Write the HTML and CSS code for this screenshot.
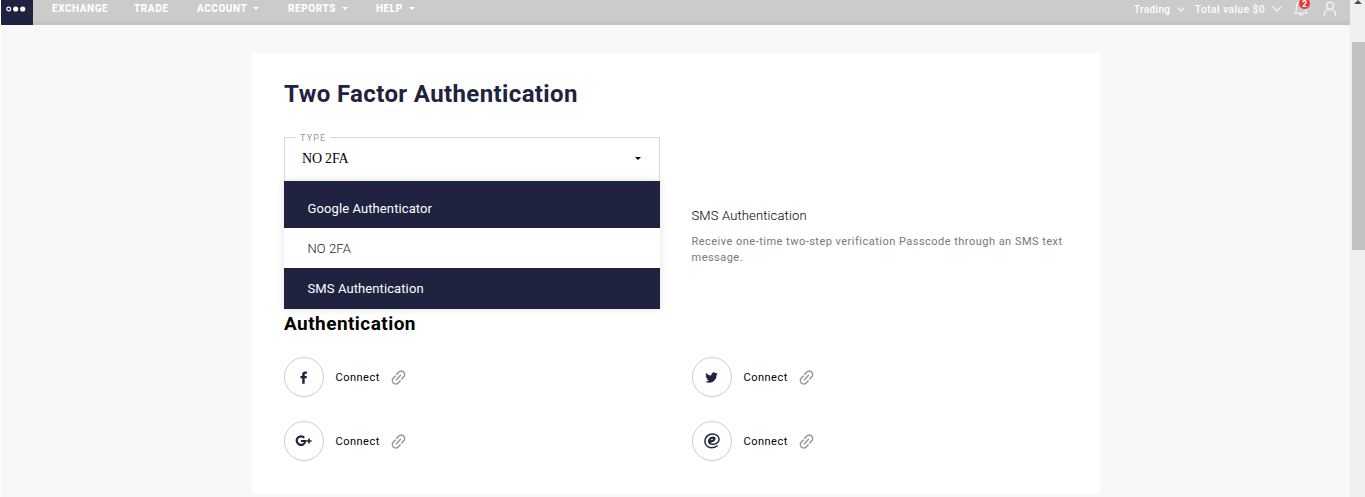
FILE: index.html
```html
<!DOCTYPE html>
<html lang="en">
<head>
    <meta charset="UTF-8">
    <meta name="viewport" content="width=device-width, initial-scale=1.0">
    <title>Two Factor Authentication</title>
    <link rel="stylesheet" href="styles.css">
</head>
<body>
    <svg class="sprite" width="0" height="0">
        <symbol id="link" viewBox="0 0 24 24">
            <g transform="rotate(-48 12 12)" fill="none" stroke="#999" stroke-width="2.4" stroke-linecap="round">
                <path d="M10 6.500H5.500a5.500 5.500 0 0 0 0 11H10M14 6.500h4.500a5.500 5.500 0 0 1 0 11H14M7 12h10"/>
            </g>
        </symbol>
    </svg>
    <div class="page">
        <header class="topbar">
            <a class="logo">
                <svg width="20" height="8" viewBox="0 0 20 8">
                    <circle cx="2.7" cy="4" r="1.9" fill="none" stroke="#fff" stroke-width="1.2"/>
                    <circle cx="9.7" cy="4" r="2.6" fill="#fff"/>
                    <circle cx="16.7" cy="4" r="2.6" fill="#fff"/>
                </svg>
            </a>
            <nav class="menu">
                <a class="exchange">EXCHANGE</a>
                <a class="trade">TRADE</a>
                <a class="account">ACCOUNT<i class="caret"></i></a>
                <a class="reports">REPORTS<i class="caret"></i></a>
                <a class="help">HELP<i class="caret"></i></a>
            </nav>
            <div class="tools">
                <span class="trading">Trading</span>
                <svg class="chevron small" width="8" height="5" viewBox="0 0 8 5"><path d="M.5.5 4 4 7.5.5"/></svg>
                <span class="total">Total value $0</span>
                <svg class="chevron" width="10" height="6" viewBox="0 0 10 6"><path d="M.5.5 5 5 9.5.5"/></svg>
                <span class="bell">
                    <svg width="16" height="16" viewBox="0 0 16 16" fill="none" stroke="#f6f6f6" stroke-width="1.2"><path d="M1 13h14M2.500 13C4 11 3 8 3.500 6 4 3 6 1.500 8 1.500s4 1.500 4.500 4.500c.5 2-.5 5 1 7M5.800 13c.5 2.700 4 2.700 4.500 0"/></svg>
                    <b class="badge">2</b>
                </span>
                <svg class="user" width="14" height="16" viewBox="0 0 14 16" fill="none" stroke="#f6f6f6" stroke-width="1.2"><circle cx="7" cy="4.700" r="3.500"/><path d="M1.300 15V13.500C1.500 10.500 4 8.300 7 8.300s5.500 2.200 5.700 5.200V15"/></svg>
            </div>
        </header>
        <main class="card">
            <h1>Two Factor Authentication</h1>
            <div class="row">
                <div class="select">
                    <span class="legend">TYPE</span>
                    <span class="value">NO 2FA</span>
                    <i class="caret dark"></i>
                    <ul class="options">
                        <li class="first">Google Authenticator</li>
                        <li class="selected">NO 2FA</li>
                        <li class="last">SMS Authentication</li>
                    </ul>
                </div>
                <div class="info">
                    <h3>SMS Authentication</h3>
                    <p>Receive one-time two-step verification Passcode through an SMS text message.</p>
                </div>
            </div>
            <h2>Authentication</h2>
            <div class="accounts">
                <div class="social">
                    <span class="round"><svg class="fb" width="8" height="13" viewBox="0 0 8 13"><path d="M2.200 12.700V7.200H.4V4.900h1.800V3.500C2.200 1.500 3.300.4 5 .4c.8 0 1.500.1 1.900.1v2.200H5.800c-.8 0-1.100.4-1.100 1v1.200h2.200l-.3 2.300H4.700v5.500z"/></svg></span>
                    <span class="connect">Connect</span>
                    <svg class="link"><use href="#link"/></svg>
                </div>
                <div class="social">
                    <span class="round"><svg class="bird" width="13" height="13" viewBox="0 0 24 24"><path d="M23.600 4.900a9 9 0 0 1-2.700.8 4.700 4.700 0 0 0 2-2.600 9 9 0 0 1-3 1.100 4.700 4.700 0 0 0-8.100 4.300A13.400 13.400 0 0 1 2.100 3.600a4.700 4.700 0 0 0 1.400 6.300 5 5 0 0 1-2.100-.6 4.700 4.700 0 0 0 3.800 4.700 5 5 0 0 1-2.100.1 4.700 4.700 0 0 0 4.400 3.300A9.500 9.500 0 0 1 .5 19.300a13.400 13.400 0 0 0 20.700-12q1.500-1 2.400-2.400z"/></svg></span>
                    <span class="connect">Connect</span>
                    <svg class="link"><use href="#link"/></svg>
                </div>
                <div class="social">
                    <span class="round"><svg class="gplus" width="18" height="12" viewBox="0 0 18 12"><path d="M9.200 2.700A4.300 4.300 0 1 0 10.300 6H6" fill="none" stroke="#1f2340" stroke-width="2.200"/><path d="M13.200 3.500h1.600v1.700h1.800v1.600h-1.800v1.700h-1.600V6.800h-1.700V5.200h1.700z"/></svg></span>
                    <span class="connect">Connect</span>
                    <svg class="link"><use href="#link"/></svg>
                </div>
                <div class="social">
                    <span class="round"><svg class="at" width="16" height="16" viewBox="0 0 16 16" fill="none" stroke="#1f2340"><path stroke-width="2.2" d="M5 8.300C8 8.500 10.500 7.300 10.500 5.800 10.500 4.200 7.600 4.100 6.100 5.800 4.500 7.500 4.600 10.700 7.500 10.900"/><path stroke-width="1.500" d="M7.300 11.200C10.800 11.600 15.100 10 15.100 6.600 15.100 3.200 12 1 8.600 1 4.200 1 .9 4.200.9 8.200c0 4 3.100 6.500 6.900 6.500 2.300 0 4.300-.8 5.700-2.200"/></svg></span>
                    <span class="connect">Connect</span>
                    <svg class="link"><use href="#link"/></svg>
                </div>
            </div>
        </main>
    </div>
    <aside class="scrollbar">
        <i class="arrow"></i>
        <i class="thumb"></i>
    </aside>
</body>
</html>
```
FILE: styles.css
```css
* {
    box-sizing: border-box;
}
body {
    margin: 0;
    height: 497px;
    display: flex;
    overflow: hidden;
    background: #fff;
    font-family: Roboto, "Liberation Sans", sans-serif;
}
h1, h2, h3, p, ul {
    margin: 0;
    padding: 0;
}
.sprite {
    position: absolute;
}
.page {
    width: 1349px;
    margin-left: 1px;
    background: #f8f8f8;
}
.topbar {
    height: 25px;
    display: flex;
    background: #cbcbcb;
    border-bottom: 4px solid #c3c3c3;
    color: #fff;
}
.logo {
    width: 32px;
    height: 25px;
    padding: 5px 0 0 5px;
    background: #1f2340;
}
.logo svg {
    display: block;
}
.menu {
    display: flex;
    padding-left: 19px;
    font-size: 10px;
    font-weight: 800;
    line-height: 17px;
    letter-spacing: 0.55px;
}
.menu a {
    display: flex;
    align-items: center;
    height: 17px;
}
.exchange {
    width: 82px;
}
.trade {
    width: 63px;
}
.account {
    width: 91px;
}
.reports {
    width: 88px;
}
.caret {
    margin-left: 6px;
    border: 3px solid transparent;
    border-top-color: currentColor;
    border-bottom: 0;
}
.tools {
    display: flex;
    align-items: flex-start;
    margin-left: auto;
    padding-right: 13px;
    font-size: 10px;
    font-weight: 500;
    line-height: 19px;
    letter-spacing: 0.35px;
}
.trading {
    width: 43px;
}
.total {
    width: 77px;
    margin-left: 10px;
    letter-spacing: 0.55px;
}
.chevron {
    margin-top: 6px;
    fill: none;
    stroke: #f6f6f6;
    stroke-width: 1.2;
}
.small {
    margin-top: 7px;
}
.bell {
    position: relative;
    width: 16px;
    height: 16px;
    margin: 0 14px 0 11px;
}
.bell svg {
    display: block;
}
.badge {
    position: absolute;
    top: -2px;
    left: 6px;
    width: 11px;
    height: 11px;
    border-radius: 50%;
    background: #e83a37;
    font-size: 9px;
    line-height: 12px;
    letter-spacing: 0;
    text-align: center;
}
.user {
    margin-top: 1px;
}
.card {
    width: 848px;
    height: 441px;
    margin: 28px 0 0 251px;
    padding: 25px 32px 0;
    background: #fff;
}
h1 {
    font-size: 24px;
    font-weight: 700;
    line-height: 32px;
    letter-spacing: 0.38px;
    color: #1f2340;
}
.row {
    display: grid;
    grid-template-columns: 376px 376px;
    column-gap: 32px;
    margin-top: 27px;
    height: 174px;
}
.select {
    position: relative;
    display: flex;
    align-items: center;
    justify-content: space-between;
    height: 44px;
    padding: 0 18px 2px 17px;
    border: 1px solid #dadada;
    border-bottom: 0;
}
.value {
    font-family: "Liberation Serif", serif;
    font-size: 14px;
    letter-spacing: -0.2px;
    color: #000;
}
.legend {
    position: absolute;
    top: -7px;
    left: 11px;
    padding: 0 4px;
    background: #fff;
    font-size: 9px;
    line-height: 14px;
    letter-spacing: 1.2px;
    color: #999;
}
.dark {
    color: #000;
}
.options {
    position: absolute;
    top: 43px;
    left: -1px;
    width: 376px;
    list-style: none;
    font-size: 13px;
    letter-spacing: 0.1px;
    box-shadow: 0 0 8px rgba(0, 0, 0, 0.12);
}
.options li {
    height: 41px;
    padding-left: 23.5px;
    line-height: 41px;
    background: #1f2340;
    color: #fff;
}
.options .first {
    height: 47px;
    padding-top: 7px;
}
.options .selected {
    height: 40px;
    background: #fff;
    color: #222;
    font-weight: 300;
}
.info {
    padding-top: 69px;
    margin-left: -0.5px;
}
h3 {
    font-size: 13px;
    font-weight: 300;
    line-height: 20px;
    letter-spacing: 0.15px;
    color: #000;
}
p {
    margin-top: 8px;
    font-size: 11px;
    line-height: 16px;
    letter-spacing: 0.48px;
    color: #777;
}
h2 {
    font-size: 19px;
    font-weight: 700;
    line-height: 26px;
    letter-spacing: 0.45px;
    color: #000;
}
.accounts {
    display: grid;
    grid-template-columns: 376px 376px;
    gap: 24px 32px;
    margin-top: 20px;
}
.social {
    display: flex;
    align-items: center;
    height: 40px;
}
.round {
    display: flex;
    align-items: center;
    justify-content: center;
    width: 40px;
    height: 40px;
    border: 1px solid #ccc;
    border-radius: 50%;
    fill: #1f2340;
}
.fb {
    margin-right: 1px;
}
.bird {
    margin-right: 2px;
}
.gplus {
    margin-right: 1px;
}
.at {
    margin-right: 1px;
}
.connect {
    width: 55px;
    margin-left: 11.5px;
    font-size: 11px;
    letter-spacing: 0.5px;
    color: #000;
}
.link {
    width: 15px;
    height: 15px;
}
.scrollbar {
    width: 15px;
    padding-left: 2px;
    background: #f0f0f0;
}
.arrow {
    display: block;
    width: 8px;
    margin-left: 2px;
    border: 4px solid transparent;
    border-top: 0;
    border-bottom-color: #505050;
}
.thumb {
    display: block;
    height: 208px;
    margin-top: 38px;
    background: #c1c1c1;
}
```
